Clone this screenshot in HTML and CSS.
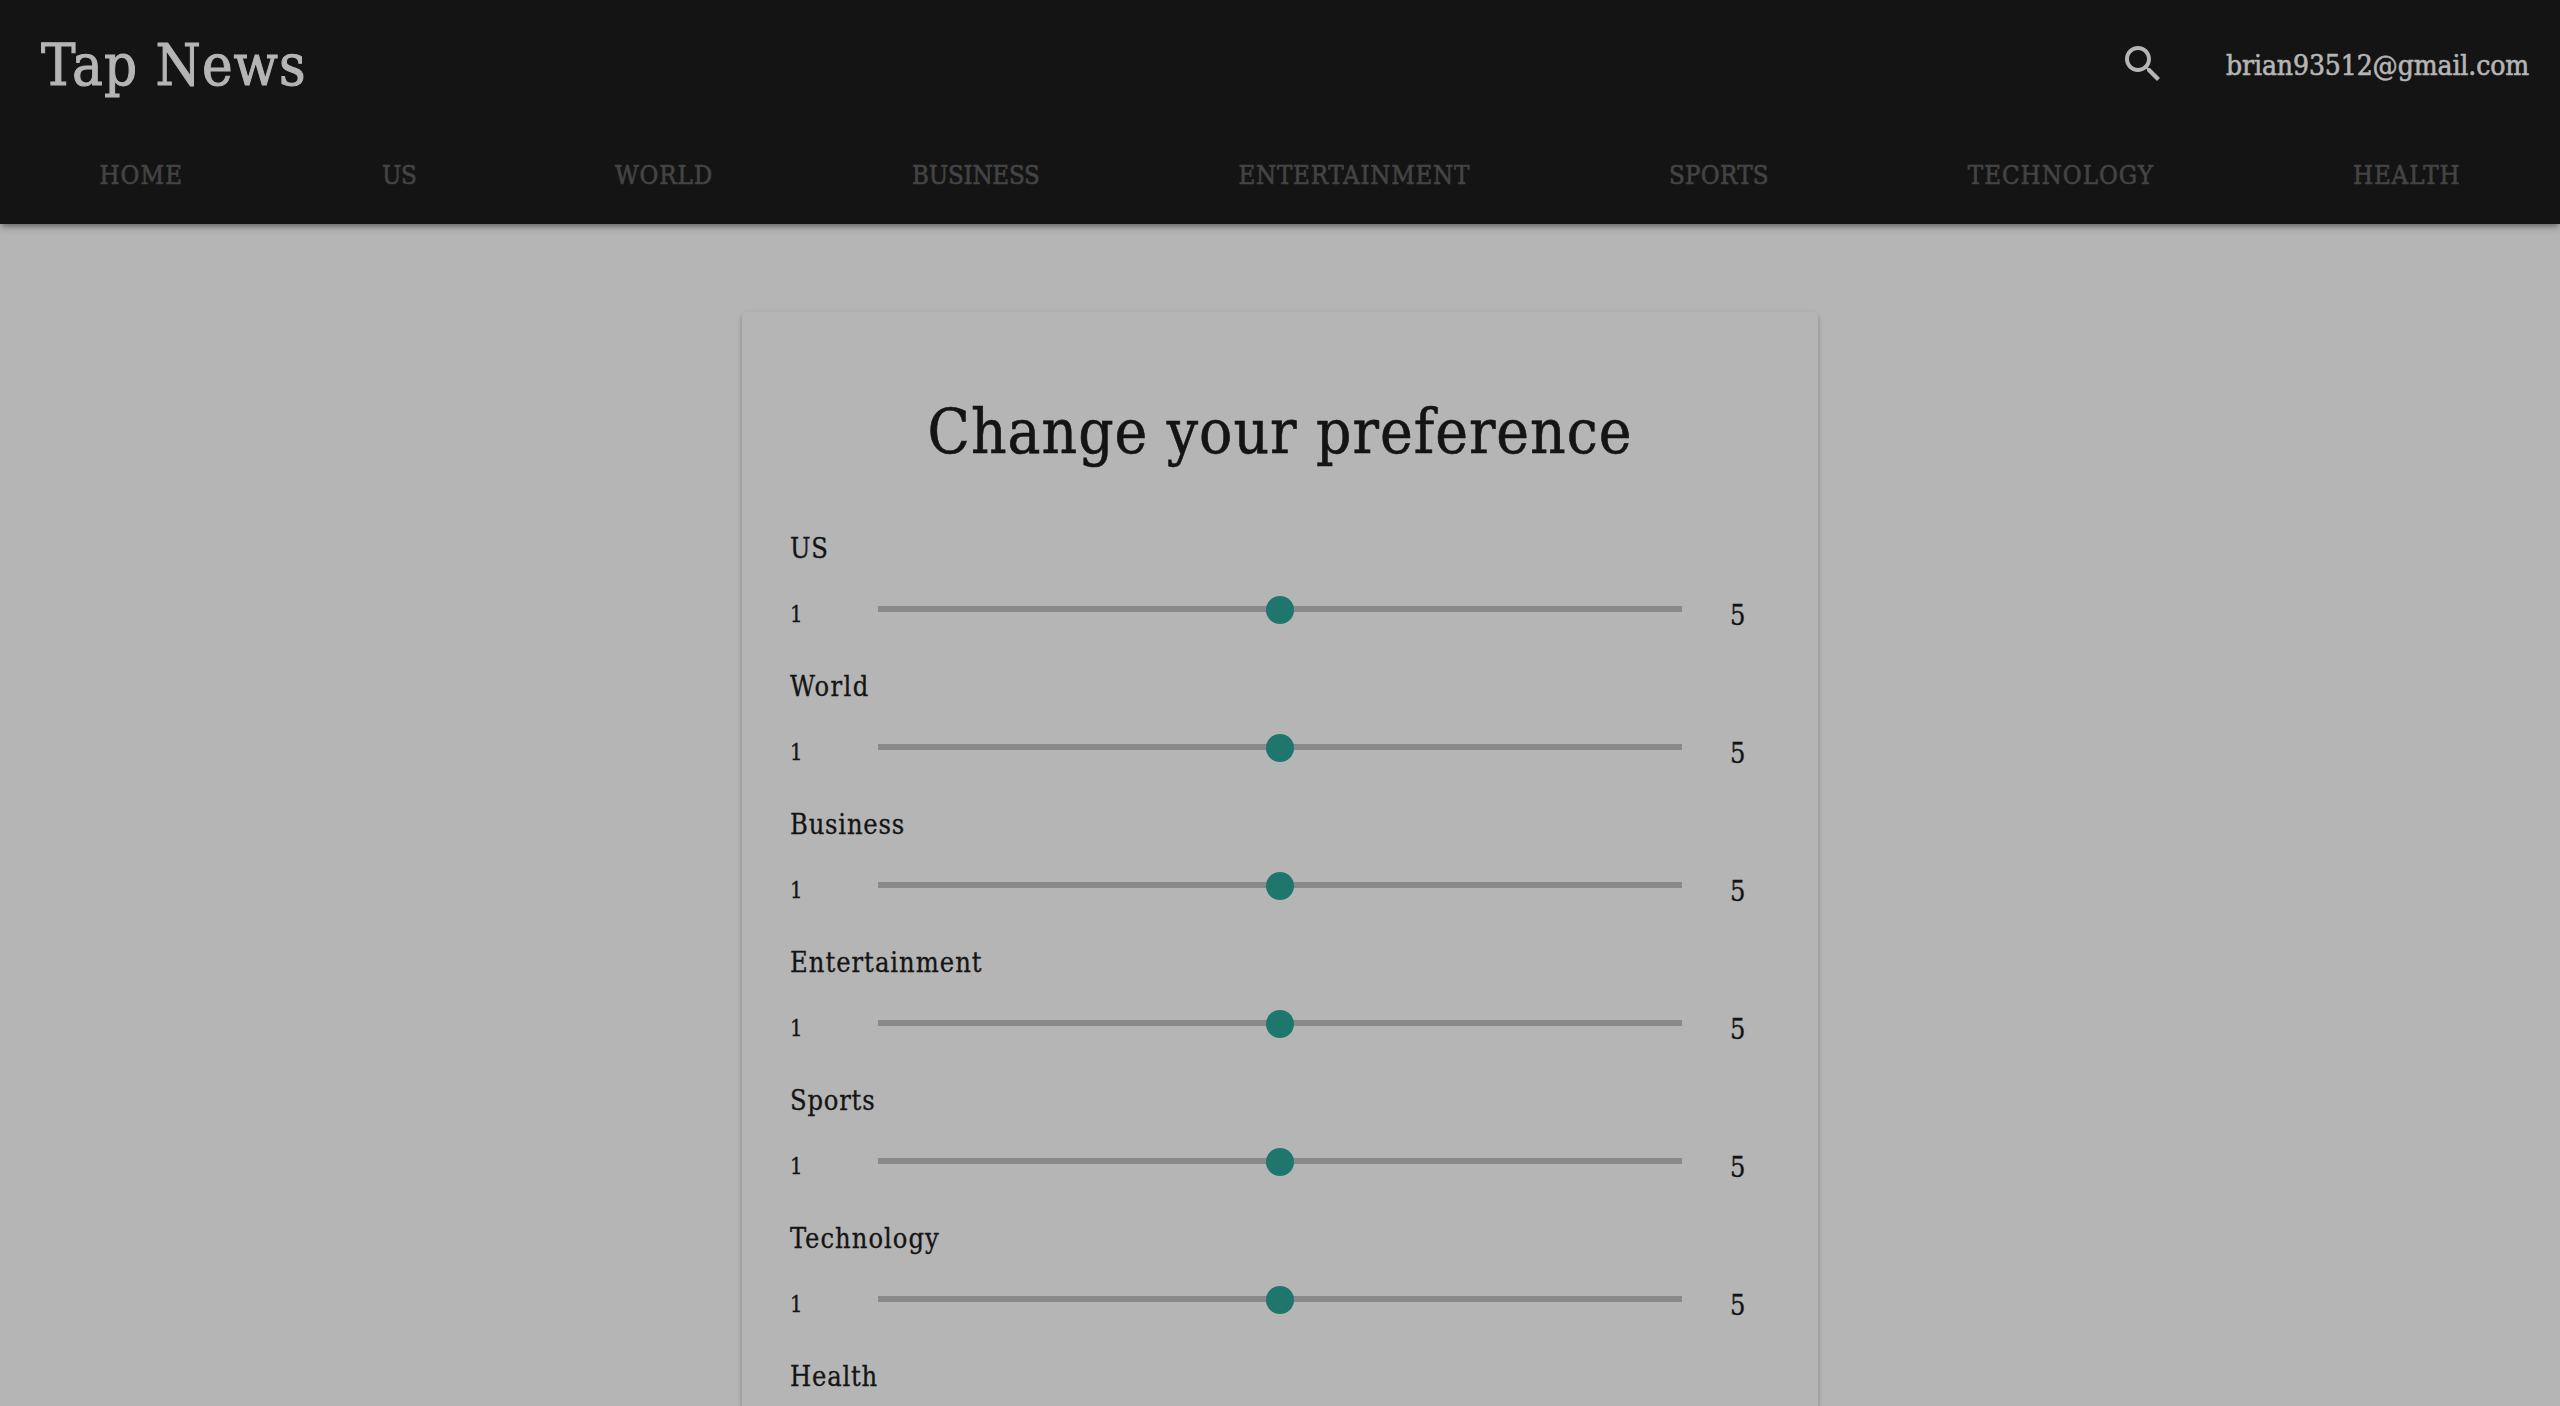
FILE: index.html
```html
<!DOCTYPE html>
<html lang="en">
<head>
<meta charset="utf-8">
<title>Tap News</title>
<link rel="stylesheet" href="styles.css">
</head>
<body>
<header class="header">
  <div class="topbar">
    <a class="brand">Tap News</a>
    <div class="account">
      <svg class="search-icon" viewBox="0 0 24 24" aria-hidden="true"><path d="M15.5 14h-.79l-.28-.27C15.41 12.59 16 11.11 16 9.5 16 5.91 13.09 3 9.5 3S3 5.91 3 9.5 5.91 16 9.5 16c1.61 0 3.09-.59 4.23-1.57l.27.28v.79l5 4.99L20.49 19l-4.99-5zm-6 0C7.01 14 5 11.99 5 9.5S7.01 5 9.5 5 14 7.01 14 9.5 11.99 14 9.5 14z"/></svg>
      <a class="email">brian93512@gmail.com</a>
    </div>
  </div>
  <nav class="nav">
    <a class="nav-home">HOME</a>
    <a class="nav-us">US</a>
    <a class="nav-world">WORLD</a>
    <a class="nav-business">BUSINESS</a>
    <a class="nav-entertainment">ENTERTAINMENT</a>
    <a class="nav-sports">SPORTS</a>
    <a class="nav-technology">TECHNOLOGY</a>
    <a class="nav-health">HEALTH</a>
  </nav>
</header>
<main class="card">
  <h1 class="title">Change your preference</h1>
  <section class="pref"><div class="label">US</div><div class="range"><span class="min">1</span><div class="track"><i class="thumb"></i></div><span class="max">5</span></div></section>
  <section class="pref"><div class="label label-world">World</div><div class="range"><span class="min">1</span><div class="track"><i class="thumb"></i></div><span class="max">5</span></div></section>
  <section class="pref"><div class="label">Business</div><div class="range"><span class="min">1</span><div class="track"><i class="thumb"></i></div><span class="max">5</span></div></section>
  <section class="pref"><div class="label label-long">Entertainment</div><div class="range"><span class="min">1</span><div class="track"><i class="thumb"></i></div><span class="max">5</span></div></section>
  <section class="pref"><div class="label">Sports</div><div class="range"><span class="min">1</span><div class="track"><i class="thumb"></i></div><span class="max">5</span></div></section>
  <section class="pref"><div class="label label-long">Technology</div><div class="range"><span class="min">1</span><div class="track"><i class="thumb"></i></div><span class="max">5</span></div></section>
  <section><div class="label label-last">Health</div></section>
</main>
</body>
</html>
```
FILE: styles.css
```css
* { box-sizing: border-box; }

body {
  display: flex;
  flex-direction: column;
  margin: 0;
  height: 1406px;
  overflow: hidden;
  background: #b5b5b5;
  color: #141414;
  font-family: "DejaVu Serif Condensed", "DejaVu Serif", serif;
  font-stretch: condensed;
  -webkit-text-stroke: .3px currentColor;
}

.header {
  flex: none;
  height: 224px;
  background: #141414;
  box-shadow: 0 4px 4px rgba(0, 0, 0, .14), 0 6px 2px -4px rgba(0, 0, 0, .12), 0 2px 10px rgba(0, 0, 0, .2);
}

.topbar {
  display: flex;
  justify-content: space-between;
  height: 128px;
  padding: 0 30px 0 41px;
}

.brand {
  color: #b5b5b5;
  font-size: 57.6px;
  line-height: 131px;
  letter-spacing: 1px;
  -webkit-text-stroke: 1px currentColor;
}

.account {
  display: flex;
  align-items: center;
  gap: 59px;
}

.search-icon {
  width: 48px;
  height: 48px;
  fill: #b5b5b5;
}

.email {
  width: 304px;
  padding-top: 2px;
  color: #b5b5b5;
  font-size: 28px;
  letter-spacing: -.1px;
  white-space: nowrap;
  -webkit-text-stroke: .6px currentColor;
}

.nav {
  display: flex;
  justify-content: space-around;
  height: 96px;
  line-height: 94px;
  color: #444;
  font-size: 25.6px;
  -webkit-text-stroke: .6px currentColor;
}

.nav-home { letter-spacing: 1.1px; }
.nav-us { letter-spacing: -.6px; }
.nav-world { letter-spacing: .9px; }
.nav-business { letter-spacing: -.2px; }
.nav-entertainment { letter-spacing: .75px; }
.nav-sports { letter-spacing: .3px; }
.nav-technology { letter-spacing: 1px; }
.nav-health { letter-spacing: .9px; }

.card {
  flex: 1;
  width: 1076px;
  margin: 88px auto 0;
  padding: 72px 48px 0;
  border-radius: 4px 4px 0 0;
  background: #b5b5b5;
  box-shadow: 0 4px 4px rgba(0, 0, 0, .14), 0 2px 6px rgba(0, 0, 0, .14);
}

.title {
  margin: 0 0 16px;
  height: 96px;
  font-size: 61.5px;
  font-weight: 400;
  line-height: 96px;
  letter-spacing: 1px;
  text-align: center;
  white-space: nowrap;
  -webkit-text-stroke: .6px currentColor;
}

.pref { height: 138px; }

.label {
  height: 100px;
  padding-top: 33px;
  font-size: 27px;
  line-height: 40px;
  letter-spacing: .8px;
}

.label-world { letter-spacing: 1.4px; }
.label-long { letter-spacing: 1px; }
.label-last { height: 73px; }

.range {
  display: flex;
  height: 38px;
}

.min {
  width: 88px;
  font-size: 22px;
  line-height: 37px;
}

.track {
  display: flex;
  justify-content: center;
  align-items: center;
  width: 804px;
  height: 6px;
  margin: 10px 48px 0 0;
  background: #8a888a;
}

.thumb {
  flex: none;
  width: 28px;
  height: 28px;
  margin-top: 2px;
  border-radius: 50%;
  background: #1f766c;
}

.max {
  font-size: 27px;
  line-height: 40px;
}
```
